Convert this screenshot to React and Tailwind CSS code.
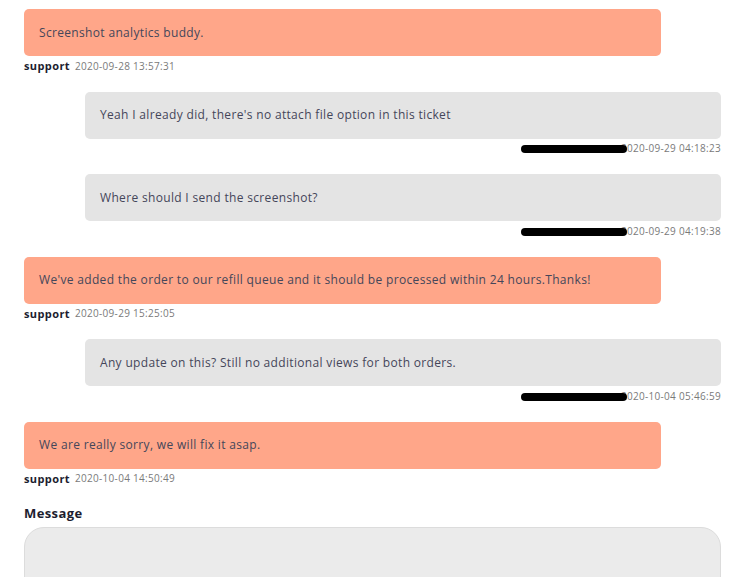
import React from 'react';

const MESSAGES = [
  { from: 'support', text: 'Screenshot analytics buddy.', date: '2020-09-28 13:57:31' },
  { from: 'user', text: "Yeah I already did, there's no attach file option in this ticket", date: '2020-09-29 04:18:23' },
  { from: 'user', text: 'Where should I send the screenshot?', date: '2020-09-29 04:19:38' },
  { from: 'support', text: "We've added the order to our refill queue and it should be processed within 24 hours.Thanks!", date: '2020-09-29 15:25:05' },
  { from: 'user', text: 'Any update on this? Still no additional views for both orders.', date: '2020-10-04 05:46:59' },
  { from: 'support', text: 'We are really sorry, we will fix it asap.', date: '2020-10-04 14:50:49' },
];

export default function App() {
  return (
    <div className="h-[577px] overflow-hidden bg-white pl-6 pr-5 pt-[9px] font-['Open_Sans',sans-serif] text-[#44465a]">
      <div className="flex flex-col gap-[15.6px]">
        {MESSAGES.map((m, i) => (m.from === 'support' ? <SupportMsg key={i} {...m} /> : <UserMsg key={i} {...m} />))}
      </div>

      <div className="mt-4 text-[13px] leading-[17px] font-bold tracking-[0.4px] text-[#1d1d2f]">Message</div>
      <div className="mt-[5px] h-[80px] rounded-[20px] border border-[#dcdcdc] bg-[#ebebeb]" />
    </div>
  );
}

function SupportMsg({ text, date }) {
  return (
    <div className="mr-[60px]">
      <div className="flex h-[47px] items-center rounded-[5px] bg-[#ffa689] px-[15px] text-[12px] tracking-[0.33px]">{text}</div>
      <div className="flex h-5 items-center gap-[5px]">
        <span className="text-[11px] font-bold tracking-[0.4px] text-[#1d1d2f]">support</span>
        <span className="text-[10px] tracking-[0.3px] text-[#7a7a7a]">{date}</span>
      </div>
    </div>
  );
}

function UserMsg({ text, date }) {
  return (
    <div className="ml-[61px]">
      <div className="flex h-[47px] items-center rounded-[5px] bg-[#e4e4e4] px-[15px] text-[12px] tracking-[0.33px]">{text}</div>
      <div className="flex h-5 items-center justify-end">
        <span className="relative text-[10px] tracking-[0.3px] text-[#7a7a7a]">
          <span className="absolute -left-[100px] top-[4px] h-[8px] w-[106px] rounded-full bg-black" />
          {date}
        </span>
      </div>
    </div>
  );
}
